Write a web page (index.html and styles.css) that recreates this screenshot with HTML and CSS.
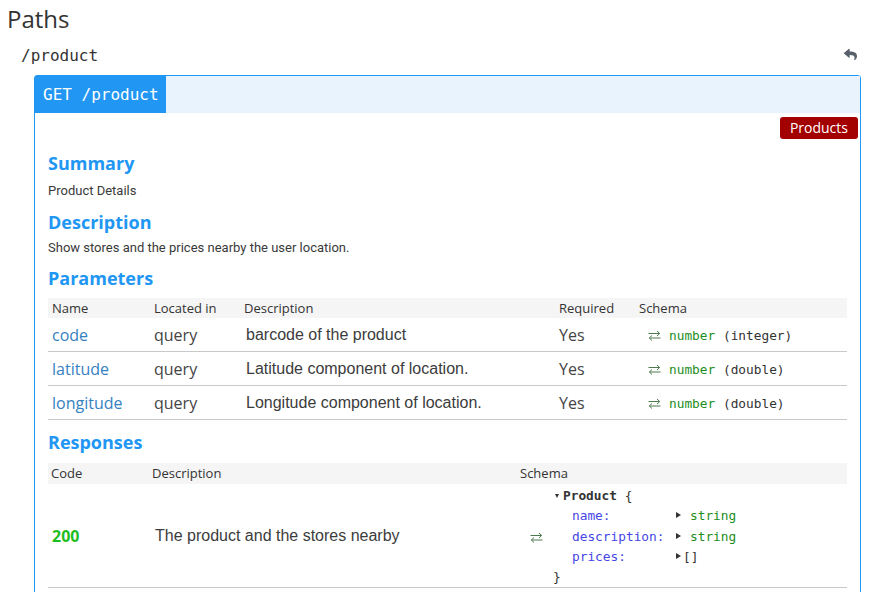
FILE: index.html
```html
<!DOCTYPE html>
<html>
<head>
<meta charset="utf-8">
<title>Paths</title>
<link rel="stylesheet" href="styles.css">
</head>
<body>
<h2 class="section-title">Paths</h2>
<div class="path-row">
  <span class="path-name">/product</span>
  <svg class="reply-icon" viewBox="0 0 512 512" width="13" height="13" aria-hidden="true"><path d="M8.3 189.8L184.3 37.9C199.7 24.5 224 35.3 224 56v80.1c160.6 1.8 288 34 288 186.2 0 61.5-39.6 122.3-83.3 154.2-13.7 9.9-33.1-2.6-28.1-18.7 45.3-145-21.5-183.5-176.6-185.7V360c0 20.7-24.3 31.5-39.7 18.2L8.3 226.2c-11.1-9.6-11.1-26.8 0-36.4z"/></svg>
</div>

<div class="op">
  <div class="op-head">
    <span class="op-method">GET /product</span>
  </div>
  <div class="op-body">
    <div class="tag-row"><span class="tag">Products</span></div>

    <h4 class="op-h">Summary</h4>
    <p class="op-text">Product Details</p>

    <h4 class="op-h">Description</h4>
    <p class="op-text op-text-tight">Show stores and the prices nearby the user location.</p>

    <h4 class="op-h">Parameters</h4>
    <table class="grid params">
      <colgroup>
        <col class="c-name"><col class="c-loc"><col class="c-desc"><col class="c-req"><col>
      </colgroup>
      <thead>
        <tr><th>Name</th><th>Located in</th><th>Description</th><th>Required</th><th>Schema</th></tr>
      </thead>
      <tbody>
        <tr>
          <td class="pname">code</td><td class="os">query</td><td class="desc">barcode of the product</td><td class="os">Yes</td>
          <td class="schema"><svg class="swap" viewBox="0 0 13 11" width="13" height="11"><path d="M0.5 3.5H11.5M9 1L11.7 3.5L9 6M12.5 8H1.5M4 5.5L1.3 8L4 10.5"/></svg><span class="type">number</span> (integer)</td>
        </tr>
        <tr>
          <td class="pname">latitude</td><td class="os">query</td><td class="desc">Latitude component of location.</td><td class="os">Yes</td>
          <td class="schema"><svg class="swap" viewBox="0 0 13 11" width="13" height="11"><path d="M0.5 3.5H11.5M9 1L11.7 3.5L9 6M12.5 8H1.5M4 5.5L1.3 8L4 10.5"/></svg><span class="type">number</span> (double)</td>
        </tr>
        <tr>
          <td class="pname">longitude</td><td class="os">query</td><td class="desc">Longitude component of location.</td><td class="os">Yes</td>
          <td class="schema"><svg class="swap" viewBox="0 0 13 11" width="13" height="11"><path d="M0.5 3.5H11.5M9 1L11.7 3.5L9 6M12.5 8H1.5M4 5.5L1.3 8L4 10.5"/></svg><span class="type">number</span> (double)</td>
        </tr>
      </tbody>
    </table>

    <h4 class="op-h op-h-resp">Responses</h4>
    <table class="grid responses">
      <colgroup>
        <col class="c-code"><col class="c-rdesc"><col>
      </colgroup>
      <thead>
        <tr><th>Code</th><th>Description</th><th>Schema</th></tr>
      </thead>
      <tbody>
        <tr>
          <td class="code">200</td>
          <td class="desc">The product and the stores nearby</td>
          <td class="rschema">
            <div class="rschema-inner">
              <svg class="swap swap-resp" viewBox="0 0 13 11" width="13" height="11"><path d="M0.5 3.5H11.5M9 1L11.7 3.5L9 6M12.5 8H1.5M4 5.5L1.3 8L4 10.5"/></svg>
              <div class="model">
                <div class="m-line"><span class="tri-down"></span><span class="m-title">Product</span> {</div>
                <div class="m-line m-prop"><span class="m-key">name:</span><span class="tri-right"></span><span class="m-val">string</span></div>
                <div class="m-line m-prop"><span class="m-key">description:</span><span class="tri-right"></span><span class="m-val">string</span></div>
                <div class="m-line m-prop"><span class="m-key">prices:</span><span class="tri-right tri-tight"></span>[]</div>
                <div class="m-line m-close">}</div>
              </div>
            </div>
          </td>
        </tr>
      </tbody>
    </table>
  </div>
</div>
</body>
</html>
```

FILE: styles.css
```css
html, body {
  margin: 0;
  padding: 0;
  background: #fff;
  color: #333;
  font-family: "Open Sans", "Noto Sans", sans-serif;
  overflow: hidden;
}

.section-title {
  margin: 0;
  padding: 3px 0 0 7px;
  font-size: 24px;
  line-height: 32px;
  font-weight: 400;
  color: #333;
}

.path-row {
  display: flex;
  align-items: center;
  justify-content: space-between;
  margin: 9px 14px 9px 21px;
  height: 22px;
}

.path-name {
  font-family: "DejaVu Sans Mono", monospace;
  font-size: 16px;
  color: #333;
}

.reply-icon {
  fill: #58616b;
  margin-top: -2px;
}

.op {
  margin: 0 10px 0 34px;
  border: 1px solid #2196f3;
  border-radius: 3px;
  min-height: 600px;
}

.op-head {
  display: flex;
  height: 37px;
  background: #e8f3fd;
}

.op-method {
  background: #2196f3;
  color: #fff;
  font-family: "DejaVu Sans Mono", monospace;
  font-size: 16px;
  line-height: 38px;
  padding: 0 7px 0 8px;
}

.op-body {
  padding: 0 13px 0 13px;
}

.tag-row {
  display: flex;
  justify-content: flex-end;
  margin: 4px -11px 0 0;
}

.tag {
  background: #a30000;
  color: #fff;
  font-size: 14px;
  line-height: 22px;
  padding: 0 10px;
  border-radius: 3px;
}

.op-h {
  margin: 10px 0 0 0;
  font-size: 18px;
  line-height: 24px;
  font-weight: 700;
  color: #2196f3;
}

.tag-row + .op-h {
  margin-top: 12px;
}

.op-text {
  margin: 7px 0 0 0;
  font-family: "Roboto", "Liberation Sans", sans-serif;
  font-size: 13px;
  line-height: 18px;
  color: #3a3a3a;
}

.op-text-tight {
  margin-top: 5px;
}

.op-text + .op-h {
  margin-top: 10px;
}

.op-text-tight + .op-h {
  margin-top: 9px;
}

.grid {
  width: 100%;
  border-collapse: collapse;
  table-layout: fixed;
  margin-top: 8px;
}

.grid.responses {
  margin-top: 9px;
}

.grid th {
  background: #f5f5f5;
  font-size: 13px;
  font-weight: 400;
  color: #333;
  text-align: left;
  padding: 0 0 0 4px;
  height: 20px;
  line-height: 20px;
}

.responses th {
  height: 21px;
  line-height: 21px;
  padding-left: 3px;
}

.grid td {
  border-bottom: 1px solid #c9c9c9;
  padding: 0 0 0 4px;
  vertical-align: middle;
  font-size: 16px;
  color: #444;
}

.params td {
  height: 32px;
}

.c-name { width: 102px; }
.c-loc { width: 90px; }
.c-desc { width: 315px; }
.c-req { width: 80px; }

.c-code { width: 101px; }
.c-rdesc { width: 368px; }

.pname {
  color: #3681c2 !important;
}

.os {
  font-family: "Open Sans", sans-serif;
}

.grid td.desc {
  font-family: "Liberation Sans", Arial, sans-serif;
  color: #3c3c3c;
  padding-left: 6px;
  padding-top: 1px;
}

.schema {
  font-family: "DejaVu Sans Mono", monospace;
  font-size: 12.8px !important;
  color: #333 !important;
  white-space: nowrap;
  padding-top: 1px !important;
}

.swap {
  fill: none;
  stroke: #4f7a4f;
  stroke-width: 1;
  vertical-align: -1px;
  margin: 0 8px 0 9px;
}

.type {
  color: #1e8e1e;
}

.code {
  font-weight: 700;
  color: #1fbe1f !important;
}

.responses td.code {
  padding-left: 4px;
}

.responses td.rschema {
  padding: 2px 0 0 13px;
  height: 101px;
}

.rschema-inner {
  display: flex;
  align-items: center;
}

.swap-resp {
  margin: 2px 12px 0 0;
}

.model {
  font-family: "DejaVu Sans Mono", monospace;
  font-size: 12.8px;
  line-height: 20.3px;
  color: #333;
}

.m-line {
  height: 20.3px;
  white-space: pre;
}

.m-title {
  font-weight: 700;
  color: #333;
}

.tri-down {
  display: inline-block;
  width: 0;
  height: 0;
  border-left: 2.5px solid transparent;
  border-right: 2.5px solid transparent;
  border-top: 4px solid #333;
  margin-right: 4px;
  vertical-align: 2px;
}

.tri-right {
  display: inline-block;
  width: 0;
  height: 0;
  border-top: 3px solid transparent;
  border-bottom: 3px solid transparent;
  border-left: 5px solid #333;
  margin-right: 9px;
  vertical-align: 2px;
}

.tri-right.tri-tight {
  margin-right: 2px;
}

.m-prop {
  padding-left: 17px;
}

.m-key {
  display: inline-block;
  width: 104px;
  color: #4646e6;
}

.m-val {
  color: #1e8e1e;
}

.m-close {
  margin-left: -2px;
}
```
